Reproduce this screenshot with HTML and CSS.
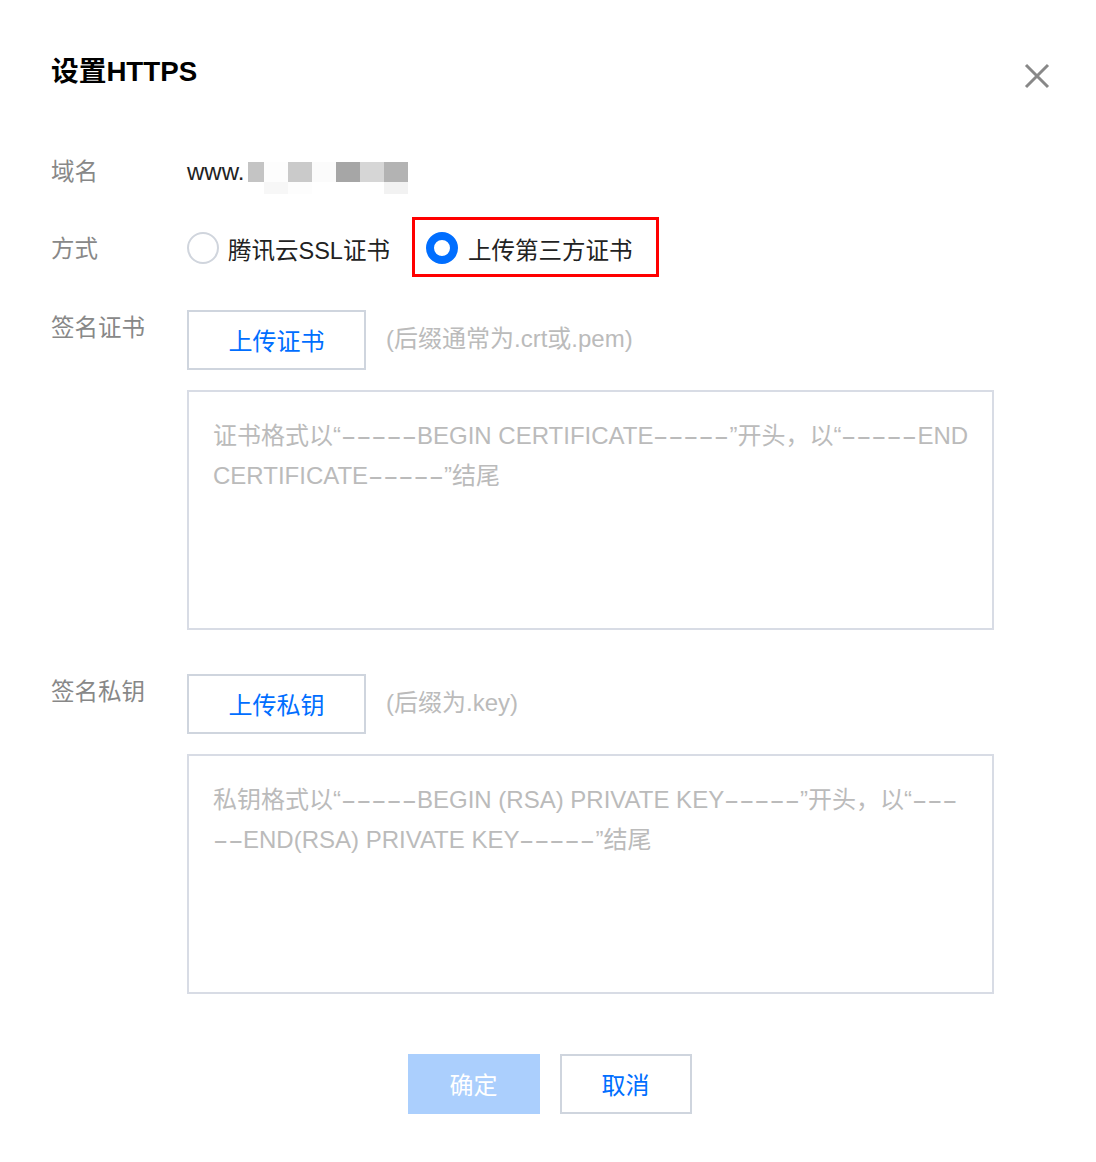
FILE: index.html
```html
<!DOCTYPE html>
<html lang="zh-CN">
<head>
<meta charset="utf-8">
<title>设置HTTPS</title>
<link rel="stylesheet" href="styles.css">
</head>
<body>
<div class="dialog">
  <div class="header">
    <h1 class="title">设置HTTPS</h1>
    <button class="close" aria-label="关闭">
      <svg width="26" height="26" viewBox="0 0 26 26"><path d="M2 2L24 24M24 2L2 24" stroke="#888" stroke-width="3" fill="none"/></svg>
    </button>
  </div>

  <div class="row row-domain">
    <div class="label">域名</div>
    <div class="value">
      <span class="www">www.</span><span class="blur">
        <span class="bk b1"></span><span class="bk b2"></span><span class="bk b3"></span><span class="bk b4"></span><span class="bk b5"></span><span class="bk b6"></span><span class="bk b7"></span>
      </span>
    </div>
  </div>

  <div class="row row-mode">
    <div class="label">方式</div>
    <div class="radios">
      <label class="radio"><span class="dot"></span><span class="rtext">腾讯云SSL证书</span></label>
      <label class="radio checked highlight"><span class="dot"></span><span class="rtext">上传第三方证书</span></label>
    </div>
  </div>

  <div class="row row-upload">
    <div class="label">签名证书</div>
    <div class="field">
      <div class="upload-line">
        <button class="btn btn-outline">上传证书</button>
        <span class="hint">(后缀通常为.crt或.pem)</span>
      </div>
      <div class="textbox">
        <span class="ph">证书格式以“<span class="dash d5">-----</span>BEGIN CERTIFICATE<span class="dash d5">-----</span>”开头，以“<span class="dash d5">-----</span>END</span>
        <span class="ph">CERTIFICATE<span class="dash d5">-----</span>”结尾</span>
      </div>
    </div>
  </div>

  <div class="row row-upload row-key">
    <div class="label">签名私钥</div>
    <div class="field">
      <div class="upload-line">
        <button class="btn btn-outline">上传私钥</button>
        <span class="hint">(后缀为.key)</span>
      </div>
      <div class="textbox">
        <span class="ph">私钥格式以“<span class="dash d5">-----</span>BEGIN (RSA) PRIVATE KEY<span class="dash d5">-----</span>”开头，以“<span class="dash d3">---</span></span>
        <span class="ph"><span class="dash d2">--</span>END(RSA) PRIVATE KEY<span class="dash d5">-----</span>”结尾</span>
      </div>
    </div>
  </div>

  <div class="footer">
    <button class="btn btn-primary">确定</button>
    <button class="btn btn-outline">取消</button>
  </div>
</div>
</body>
</html>
```

FILE: styles.css
```css
* { box-sizing: border-box; }
html, body {
  margin: 0;
  padding: 0;
  background: #fff;
}
body {
  font-family: "Liberation Sans", "Noto Sans CJK SC", sans-serif;
  color: #222;
}
.dialog {
  width: 1096px;
  padding: 52px 46px 0 51px;
}
.header {
  display: flex;
  justify-content: space-between;
  align-items: center;
  height: 40px;
}
.title {
  margin: 0;
  font-size: 27.7px;
  line-height: 40px;
  font-weight: 700;
  color: #000;
}
.close {
  border: 0;
  background: none;
  padding: 0;
  width: 26px;
  height: 26px;
  margin-top: 8px;
  display: flex;
}
.row {
  display: flex;
}
.label {
  width: 136px;
  flex: none;
  font-size: 23.5px;
  color: #888;
  line-height: 40px;
}
.row-domain {
  margin-top: 60px;
  align-items: center;
  height: 40px;
}
.value {
  display: flex;
  align-items: center;
  font-size: 24px;
}
.www { color: #222; }
.blur {
  display: grid;
  grid-template-columns: 16px 24px 24px 24px 24px 24px 24px;
  grid-template-rows: 20px 12px;
  margin-top: 12px;
  margin-left: 4px;
}
.bk { grid-row: 1 / span 2; display: block; }
.b1 { background: linear-gradient(#c4c4c4 0 20px, #fff 20px); }
.b2 { background: linear-gradient(#fdfdfd 0 20px, #f7f7f7 20px); }
.b3 { background: linear-gradient(#cacaca 0 20px, #fdfdfd 20px); }
.b4 { background: linear-gradient(#fbfbfb 0 20px, #fff 20px); }
.b5 { background: linear-gradient(#a6a6a6 0 20px, #fff 20px); }
.b6 { background: linear-gradient(#d6d6d6 0 20px, #fff 20px); }
.b7 { background: linear-gradient(#b3b3b3 0 20px, #f2f2f2 20px); }

.row-mode {
  margin-top: 25px;
  align-items: center;
  height: 60px;
}
.row-mode .label { margin-top: 4px; }
.radios {
  display: flex;
  align-items: center;
  gap: 22px;
  height: 60px;
}
.radio {
  display: flex;
  align-items: center;
  height: 60px;
  font-size: 23.5px;
  color: #222;
}
.rtext { padding-top: 3px; }
.radio .dot {
  width: 32px;
  height: 32px;
  border-radius: 50%;
  border: 2px solid #d0d5dd;
  margin-right: 9px;
  margin-top: 2px;
  background: #fff;
}
.radio.checked .dot {
  border: 8px solid #006eff;
}
.radio.highlight {
  border: 3px solid #f00;
  padding: 0 24px 0 11px;
}
.radio.highlight .dot { margin-right: 10px; }

.row-upload {
  margin-top: 33px;
  align-items: flex-start;
}
.row-upload .label { line-height: 36px; }
.row-key { margin-top: 44px; }
.field {
  display: flex;
  flex-direction: column;
  gap: 20px;
}
.upload-line {
  display: flex;
  align-items: center;
  gap: 20px;
}
.btn {
  font-family: "Liberation Sans", "Noto Sans CJK SC", sans-serif;
  font-size: 24px;
  height: 60px;
  padding: 0 0 2px;
  cursor: pointer;
}
.btn-outline {
  width: 179px;
  background: #fff;
  border: 2px solid #cfd5de;
  color: #006eff;
}
.hint {
  font-size: 24px;
  color: #bbb;
  margin-top: -8px;
}
.textbox {
  width: 807px;
  height: 240px;
  border: 2px solid #d8dce5;
  padding: 24px 24px 0;
  display: flex;
  flex-direction: column;
}
.ph {
  display: block;
  font-size: 24px;
  line-height: 40px;
  color: #bbb;
  white-space: nowrap;
}
.dash {
  display: inline-block;
  letter-spacing: 0;
  transform: scaleX(1.9);
  transform-origin: 0 50%;
}
.d5 { margin-right: 36px; }
.d3 { margin-right: 22px; }
.d2 { margin-right: 14px; }
.footer {
  display: flex;
  justify-content: center;
  gap: 20px;
  margin-top: 60px;
  margin-left: -51px;
  margin-right: -46px;
  padding-left: 3px;
}
.btn-primary {
  width: 132px;
  background: #abcffd;
  border: 0;
  color: #fff;
}
.footer .btn-outline { width: 132px; }
```
